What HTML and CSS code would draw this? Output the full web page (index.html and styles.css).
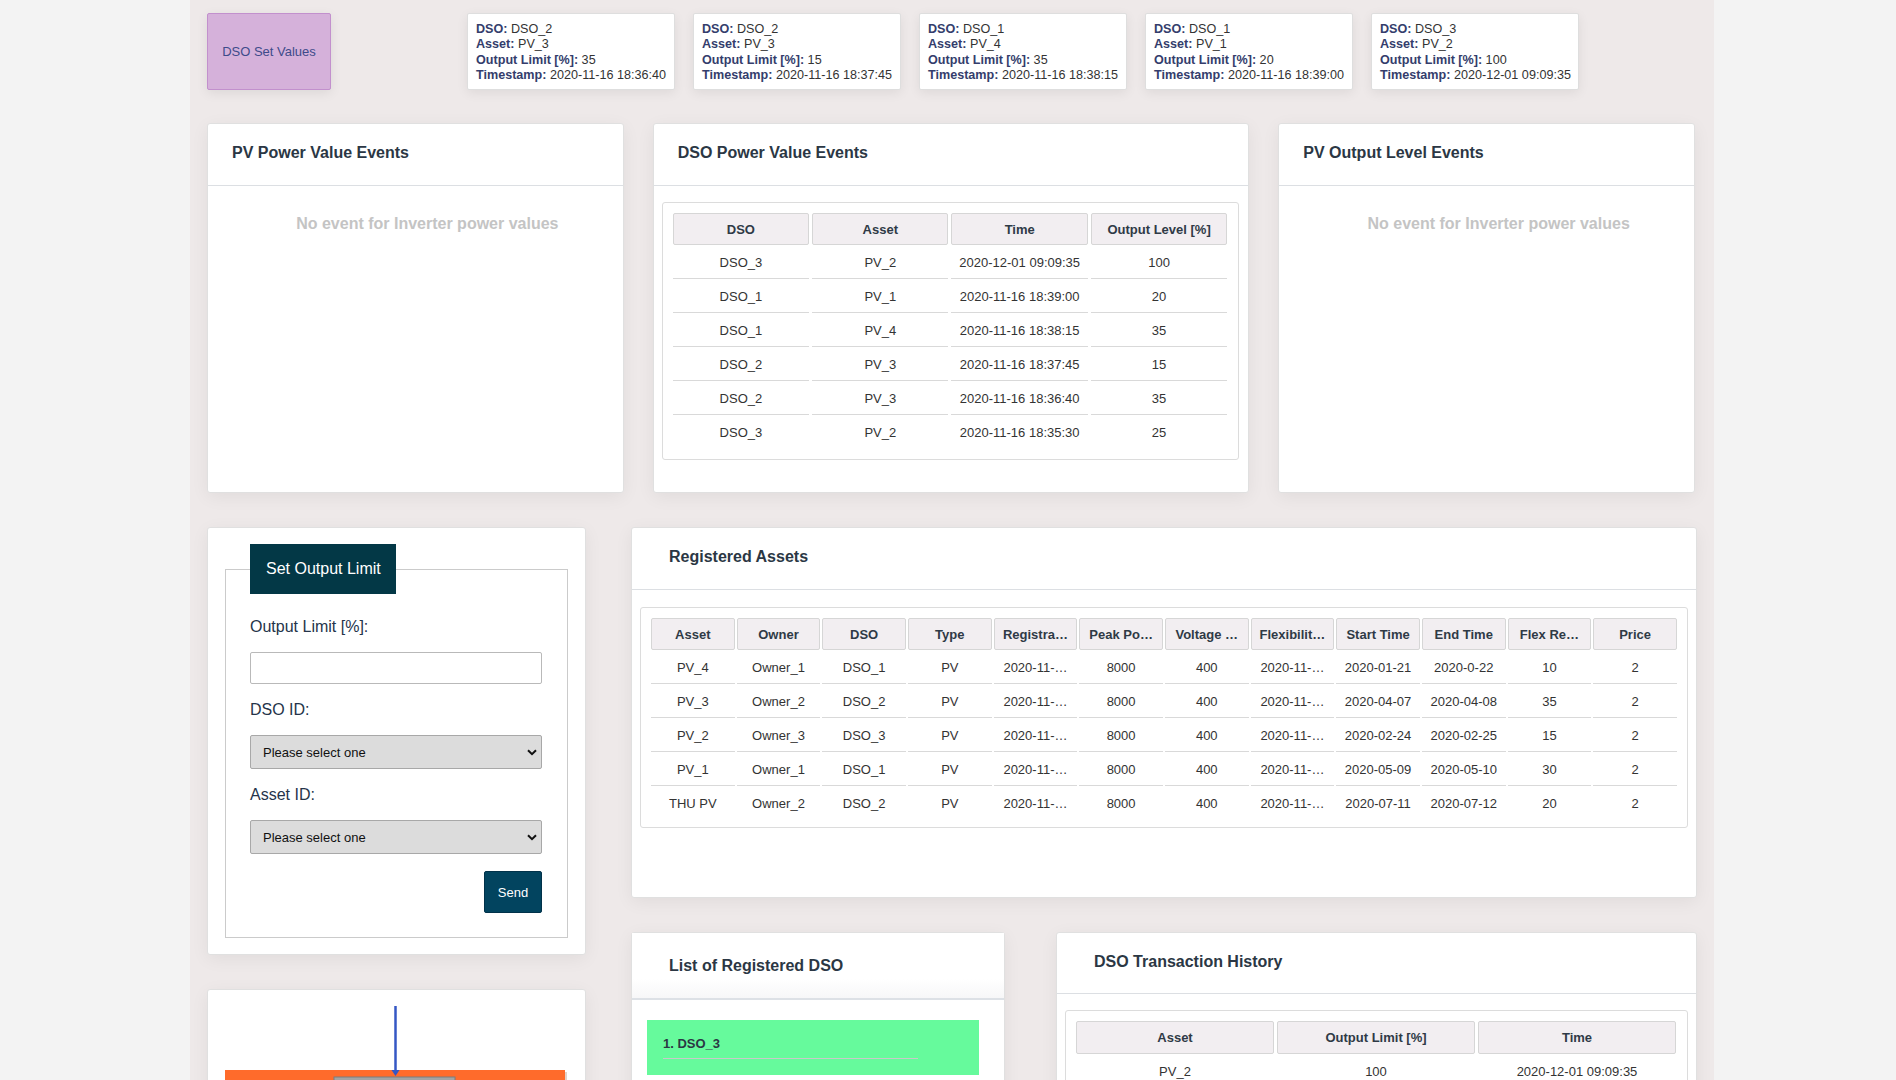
FILE: index.html
```html
<!DOCTYPE html>
<html lang="en">
<head>
<meta charset="utf-8">
<title>DSO Dashboard</title>
<link rel="stylesheet" href="styles.css">
</head>
<body>
<div class="page">
  <div class="top-row">
    <div class="set-values">DSO Set Values</div>
    <div class="events">
      <div class="ev-card"><div><b>DSO:</b> DSO_2</div><div><b>Asset:</b> PV_3</div><div><b>Output Limit [%]:</b> 35</div><div><b>Timestamp:</b> 2020-11-16 18:36:40</div></div>
      <div class="ev-card"><div><b>DSO:</b> DSO_2</div><div><b>Asset:</b> PV_3</div><div><b>Output Limit [%]:</b> 15</div><div><b>Timestamp:</b> 2020-11-16 18:37:45</div></div>
      <div class="ev-card"><div><b>DSO:</b> DSO_1</div><div><b>Asset:</b> PV_4</div><div><b>Output Limit [%]:</b> 35</div><div><b>Timestamp:</b> 2020-11-16 18:38:15</div></div>
      <div class="ev-card"><div><b>DSO:</b> DSO_1</div><div><b>Asset:</b> PV_1</div><div><b>Output Limit [%]:</b> 20</div><div><b>Timestamp:</b> 2020-11-16 18:39:00</div></div>
      <div class="ev-card"><div><b>DSO:</b> DSO_3</div><div><b>Asset:</b> PV_2</div><div><b>Output Limit [%]:</b> 100</div><div><b>Timestamp:</b> 2020-12-01 09:09:35</div></div>
    </div>
  </div>

  <div class="row2">
    <section class="card side-card">
      <header class="card-head">PV Power Value Events</header>
      <div class="empty">No event for Inverter power values</div>
    </section>
    <section class="card mid-card">
      <header class="card-head">DSO Power Value Events</header>
      <div class="tbox tbox-dso">
        <table class="grid g3">
          <thead><tr><th>DSO</th><th>Asset</th><th>Time</th><th>Output Level [%]</th></tr></thead>
          <tbody>
            <tr><td>DSO_3</td><td>PV_2</td><td>2020-12-01 09:09:35</td><td>100</td></tr>
            <tr><td>DSO_1</td><td>PV_1</td><td>2020-11-16 18:39:00</td><td>20</td></tr>
            <tr><td>DSO_1</td><td>PV_4</td><td>2020-11-16 18:38:15</td><td>35</td></tr>
            <tr><td>DSO_2</td><td>PV_3</td><td>2020-11-16 18:37:45</td><td>15</td></tr>
            <tr><td>DSO_2</td><td>PV_3</td><td>2020-11-16 18:36:40</td><td>35</td></tr>
            <tr><td>DSO_3</td><td>PV_2</td><td>2020-11-16 18:35:30</td><td>25</td></tr>
          </tbody>
        </table>
      </div>
    </section>
    <section class="card side-card">
      <header class="card-head">PV Output Level Events</header>
      <div class="empty">No event for Inverter power values</div>
    </section>
  </div>

  <div class="row3">
    <div class="left-col">
      <section class="card form-card">
        <fieldset class="limit-form">
          <legend>Set Output Limit</legend>
          <label class="flabel" for="lim">Output Limit [%]:</label>
          <input class="finput" id="lim" type="text">
          <label class="flabel" for="dso">DSO ID:</label>
          <div class="sel-wrap">
            <select class="fselect" id="dso"><option>Please select one</option></select>
            <svg class="chev" width="10" height="7" viewBox="0 0 10 7"><path d="M1 1.2 L5 5.2 L9 1.2" fill="none" stroke="#111" stroke-width="2"/></svg>
          </div>
          <label class="flabel" for="asset">Asset ID:</label>
          <div class="sel-wrap">
            <select class="fselect" id="asset"><option>Please select one</option></select>
            <svg class="chev" width="10" height="7" viewBox="0 0 10 7"><path d="M1 1.2 L5 5.2 L9 1.2" fill="none" stroke="#111" stroke-width="2"/></svg>
          </div>
          <div class="send-row"><button class="send" type="button">Send</button></div>
        </fieldset>
      </section>
      <section class="card diagram-card">
        <svg width="377" height="120" viewBox="0 0 377 120">
          <rect x="19" y="82" width="340" height="60" fill="#8a4a2a" opacity="0.25"/>
          <rect x="17" y="80" width="340" height="60" fill="#ff6b2b"/>
          <rect x="126" y="87" width="121" height="40" fill="#a3a3a3" stroke="#7d7d7d" stroke-width="1"/>
          <line x1="187.5" y1="16" x2="187.5" y2="80" stroke="#3557c4" stroke-width="2.5"/>
          <path d="M183.5 80 L191.5 80 L187.5 86 Z" fill="#3557c4"/>
        </svg>
      </section>
    </div>

    <div class="right-col">
      <section class="card assets-card">
        <header class="card-head wide-pad">Registered Assets</header>
        <div class="tbox tbox-assets">
          <table class="grid g2">
            <thead><tr><th>Asset</th><th>Owner</th><th>DSO</th><th>Type</th><th>Registra…</th><th>Peak Po…</th><th>Voltage …</th><th>Flexibilit…</th><th>Start Time</th><th>End Time</th><th>Flex Re…</th><th>Price</th></tr></thead>
            <tbody>
              <tr><td>PV_4</td><td>Owner_1</td><td>DSO_1</td><td>PV</td><td>2020-11-…</td><td>8000</td><td>400</td><td>2020-11-…</td><td>2020-01-21</td><td>2020-0-22</td><td>10</td><td>2</td></tr>
              <tr><td>PV_3</td><td>Owner_2</td><td>DSO_2</td><td>PV</td><td>2020-11-…</td><td>8000</td><td>400</td><td>2020-11-…</td><td>2020-04-07</td><td>2020-04-08</td><td>35</td><td>2</td></tr>
              <tr><td>PV_2</td><td>Owner_3</td><td>DSO_3</td><td>PV</td><td>2020-11-…</td><td>8000</td><td>400</td><td>2020-11-…</td><td>2020-02-24</td><td>2020-02-25</td><td>15</td><td>2</td></tr>
              <tr><td>PV_1</td><td>Owner_1</td><td>DSO_1</td><td>PV</td><td>2020-11-…</td><td>8000</td><td>400</td><td>2020-11-…</td><td>2020-05-09</td><td>2020-05-10</td><td>30</td><td>2</td></tr>
              <tr><td>THU PV</td><td>Owner_2</td><td>DSO_2</td><td>PV</td><td>2020-11-…</td><td>8000</td><td>400</td><td>2020-11-…</td><td>2020-07-11</td><td>2020-07-12</td><td>20</td><td>2</td></tr>
            </tbody>
          </table>
        </div>
      </section>

      <div class="row3b">
        <section class="card dso-list-card">
          <header class="card-head wide-pad list-head">List of Registered DSO</header>
          <div class="dso-list">
            <div class="dso-item">1. DSO_3</div>
          </div>
        </section>
        <section class="card tx-card">
          <header class="card-head wide-pad tx-head">DSO Transaction History</header>
          <div class="tbox tbox-tx">
            <table class="grid g3">
              <thead><tr><th>Asset</th><th>Output Limit [%]</th><th>Time</th></tr></thead>
              <tbody>
                <tr><td>PV_2</td><td>100</td><td>2020-12-01 09:09:35</td></tr>
                <tr><td>PV_3</td><td>35</td><td>2020-11-16 18:36:40</td></tr>
              </tbody>
            </table>
          </div>
        </section>
      </div>
    </div>
  </div>
</div>
</body>
</html>
```

FILE: styles.css
```css
* { box-sizing: border-box; }

html, body {
  margin: 0;
  padding: 0;
  background: #f3f3f3;
  font-family: "Liberation Sans", Arial, sans-serif;
  color: #333;
}

.page {
  width: 1524px;
  margin-left: 190px;
  min-height: 1300px;
  background: #eee9e9;
  padding: 13px 19px 40px 17px;
}

/* top row */
.top-row {
  display: flex;
  align-items: flex-start;
}

.set-values {
  width: 124px;
  height: 77px;
  background: #d5b1da;
  border: 1px solid #c290cd;
  border-radius: 2px;
  display: flex;
  align-items: center;
  justify-content: center;
  font-size: 13px;
  color: #3e4b8a;
  box-shadow: 0 3px 12px rgba(0, 0, 0, 0.08);
}

.events {
  display: flex;
  gap: 18px;
  margin-left: 136px;
}

.ev-card {
  width: 208px;
  height: 77px;
  background: #fff;
  border: 1px solid #dedede;
  border-radius: 2px;
  padding: 2px 8px 0 8px;
  display: flex;
  flex-direction: column;
  justify-content: center;
  font-size: 12.6px;
  line-height: 15.3px;
  color: #333;
  box-shadow: 0 3px 12px rgba(0, 0, 0, 0.07);
  white-space: nowrap;
}

.ev-card b {
  color: #343d6c;
}

/* cards */
.card {
  background: #fff;
  border: 1px solid #e0e0e0;
  border-radius: 3px;
  box-shadow: 0 4px 18px rgba(0, 0, 0, 0.06);
}

.card-head {
  height: 62px;
  border-bottom: 1px solid #dcdfe3;
  padding: 0 0 3px 24px;
  display: flex;
  align-items: center;
  font-size: 16px;
  font-weight: bold;
  color: #2b3744;
}

.card-head.wide-pad {
  padding-left: 37px;
}

/* row 2 */
.row2 {
  display: flex;
  gap: 29px;
  margin-top: 33px;
}

.row2 .card {
  height: 370px;
}

.side-card {
  width: 417px;
}

.mid-card {
  width: 597px;
}

.empty {
  padding: 29px 0 0 24px;
  text-align: center;
  font-size: 16px;
  line-height: 18px;
  font-weight: bold;
  color: #c4c4c4;
}

/* tables */
.tbox {
  border: 1px solid #dcdcdc;
  border-radius: 3px;
  padding: 10px 8px 10px 7px;
}

.tbox-dso {
  margin: 16px 9px 0 8px;
}

.grid {
  width: 100%;
  table-layout: fixed;
  border-collapse: separate;
  font-size: 13px;
  text-align: center;
}

.g3 { border-spacing: 3px 0; }
.g2 { border-spacing: 2px 0; }

.grid th {
  height: 32px;
  background: #f2eef1;
  border: 1px solid #d6d6d6;
  border-radius: 2px;
  font-weight: bold;
  color: #2f3a46;
  padding: 0 4px;
  white-space: nowrap;
  overflow: hidden;
  text-overflow: ellipsis;
}

.grid td {
  height: 34px;
  border-bottom: 1px solid #d9d9d9;
  color: #333;
  padding: 1px 4px 0 4px;
  white-space: nowrap;
  overflow: hidden;
  text-overflow: ellipsis;
}

.grid tbody tr:last-child td {
  border-bottom: none;
}

/* row 3 */
.row3 {
  display: flex;
  align-items: flex-start;
  margin-top: 34px;
}

.left-col {
  width: 379px;
  display: flex;
  flex-direction: column;
  gap: 34px;
}

.right-col {
  width: 1066px;
  margin-left: 45px;
  display: flex;
  flex-direction: column;
  gap: 34px;
}

.form-card {
  height: 428px;
  padding: 16px 17px 0 17px;
}

.limit-form {
  margin: 0;
  border: 1px solid #cbcbcb;
  padding: 23px 24px 24px 24px;
  min-width: 0;
}

.limit-form legend {
  height: 50px;
  line-height: 50px;
  padding: 0 15px 0 16px;
  background: #033846;
  color: #fff;
  font-size: 16px;
}

.flabel {
  display: block;
  font-size: 16px;
  line-height: 20px;
  color: #25344a;
  margin-bottom: 15px;
}

.finput {
  display: block;
  width: 292px;
  height: 32px;
  border: 1px solid #b9b9b9;
  border-radius: 2px;
  margin: 0 0 16px 0;
  font-family: inherit;
}

.sel-wrap {
  position: relative;
  width: 292px;
  margin-bottom: 16px;
}

.fselect {
  display: block;
  width: 292px;
  height: 34px;
  appearance: none;
  -webkit-appearance: none;
  background: #dcdcdc;
  border: 1px solid #a8a8a8;
  border-radius: 2px;
  padding: 0 12px;
  font-family: "Liberation Sans", Arial, sans-serif;
  font-size: 13px;
  color: #111;
}

.chev {
  position: absolute;
  right: 5px;
  top: 14px;
}

.send-row {
  width: 292px;
  display: flex;
  justify-content: flex-end;
  padding-top: 1px;
}

.send {
  width: 58px;
  height: 42px;
  background: #02445f;
  border: 1px solid #01324a;
  border-radius: 2px;
  color: #fff;
  font-family: "Liberation Sans", Arial, sans-serif;
  font-size: 13px;
}

.diagram-card {
  height: 220px;
}

.diagram-card svg {
  display: block;
}

.assets-card {
  height: 371px;
}

.tbox-assets {
  margin: 17px 8px 0 8px;
  padding: 10px 8px 7px 8px;
}

.row3b {
  display: flex;
  align-items: flex-start;
  gap: 51px;
}

.dso-list-card {
  width: 374px;
  height: 220px;
}

.list-head {
  height: 67px;
  border-bottom: 2px solid #dde1e6;
  background: linear-gradient(#fff 70%, #f7f7f8);
  padding-bottom: 0;
}

.dso-list {
  padding: 20px 25px 0 15px;
}

.dso-item {
  background: #66fa9c;
  padding: 16px 0 16px 16px;
  font-size: 13px;
  line-height: 16px;
  font-weight: bold;
  color: #2b3744;
}

.dso-item::after {
  content: "";
  display: block;
  width: 255px;
  margin-top: 6px;
  border-bottom: 1px solid #c9c9c9;
}

.tx-card {
  width: 641px;
  height: 220px;
}

.tx-head {
  height: 61px;
}

.tbox-tx {
  margin: 16px 8px 0 8px;
}

.tbox-tx .grid th {
  height: 33px;
}
```
